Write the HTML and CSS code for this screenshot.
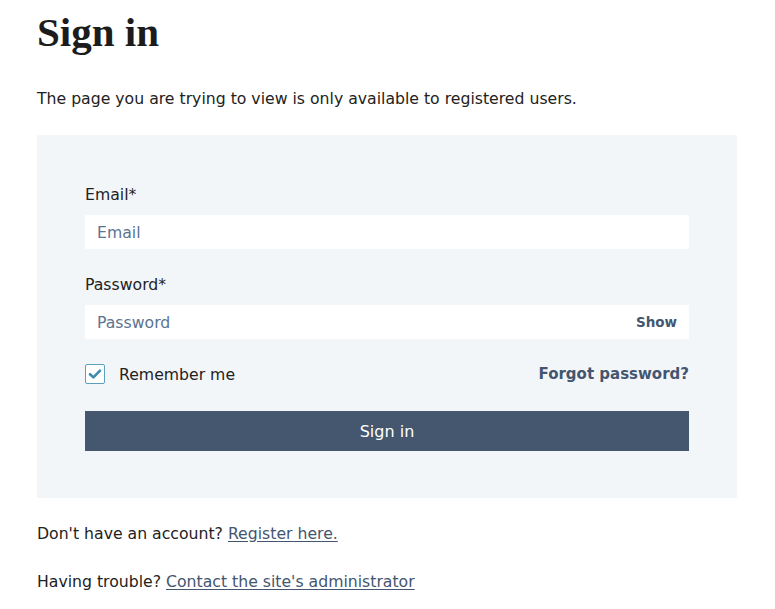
FILE: index.html
```html
<!DOCTYPE html>
<html lang="en">
<head>
<meta charset="utf-8">
<title>Sign in</title>
<link rel="stylesheet" href="styles.css">
</head>
<body>
<main class="page">
  <h1 class="title">Sign in</h1>
  <p class="intro">The page you are trying to view is only available to registered users.</p>
  <form class="panel">
    <label class="label" for="email">Email*</label>
    <div class="field field-email"><input id="email" class="input" type="text" placeholder="Email"></div>
    <label class="label label-pw" for="pw">Password*</label>
    <div class="field"><input id="pw" class="input" type="password" placeholder="Password"><span class="show">Show</span></div>
    <div class="row">
      <label class="remember"><span class="check"><svg width="14" height="12" viewBox="0 0 14 12"><path d="M2 6.2 L5.4 9.4 L12 2.6" fill="none" stroke="#3d8bb0" stroke-width="2.6" stroke-linecap="round" stroke-linejoin="round"/></svg></span>Remember me</label>
      <a class="forgot" href="#">Forgot password?</a>
    </div>
    <button class="btn" type="button">Sign in</button>
  </form>
  <p class="line first">Don't have an account? <a class="link" href="#">Register here.</a></p>
  <p class="line second">Having trouble? <a class="link" href="#">Contact the site's administrator</a></p>
</main>
</body>
</html>
```
FILE: styles.css
```css
html, body { margin: 0; padding: 0; background: #fff; }
body { font-family: "DejaVu Sans", "Noto Sans", sans-serif; color: #222; font-size: 15.7px; }
.page { padding: 0 38px 0 37px; }
.title { font-family: "Liberation Serif", "Times New Roman", serif; font-weight: bold; font-size: 41px; margin: 0; padding-top: 10px; line-height: 44px; color: #1c1c1c; }
.intro { margin: 35px 0 0; line-height: 20px; }
.panel { background: #f3f6f9; margin-top: 26px; padding: 48px 48px 47px; display: flex; flex-direction: column; }
.label { line-height: 20px; margin-top: 2px; }
.label-pw { margin-top: 26px; }
.field { background: #fff; height: 34px; margin-top: 10px; display: flex; align-items: center; padding: 0 12px; }
.input { flex: 1; border: 0; outline: 0; background: transparent; font: inherit; color: #222; padding: 0; }
.input::placeholder { color: #5c7391; }
.show { font-weight: bold; font-size: 13.5px; color: #44566f; }
.row { display: flex; justify-content: space-between; align-items: center; margin-top: 24px; height: 22px; }
.remember { display: flex; align-items: center; gap: 14px; }
.check { width: 18px; height: 18px; border: 1px solid #5aa0c0; border-radius: 2px; background: #fff; display: flex; align-items: center; justify-content: center; }
.forgot { font-weight: bold; font-size: 15px; color: #44566f; text-decoration: none; }
.btn { margin-top: 26px; height: 40px; background: #44576f; color: #fff; border: 0; font: inherit; font-size: 16px; cursor: pointer; }
.line { margin: 0; line-height: 20px; }
.line.first { margin-top: 26px; }
.line.second { margin-top: 28px; }
.link { color: #44566f; text-decoration: underline; text-underline-offset: 2px; }
```
